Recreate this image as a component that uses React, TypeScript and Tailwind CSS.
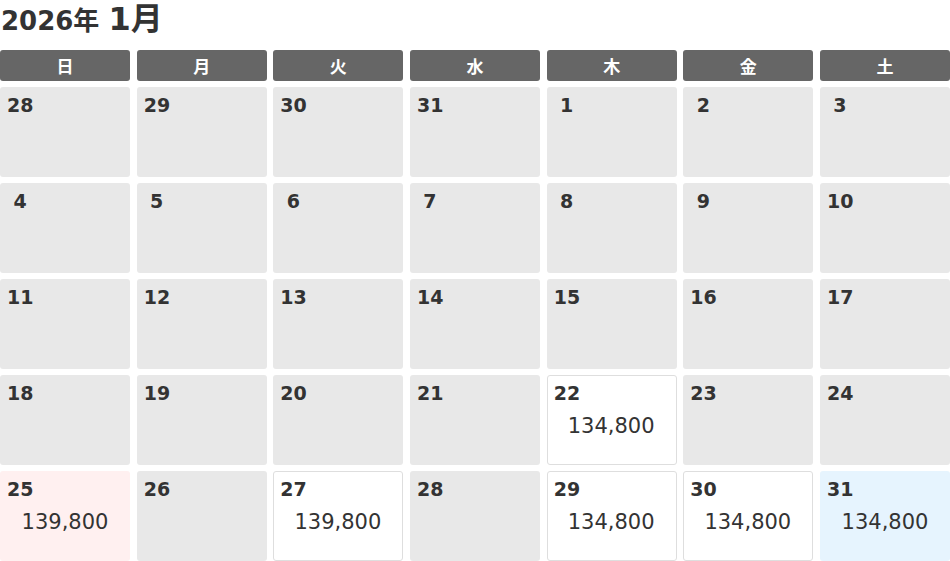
import React from "react";

type Cell = { d: number; kind: "gray" | "white" | "pink" | "blue"; price?: string };

const weeks: Cell[][] = [
  [28, 29, 30, 31, 1, 2, 3].map((d) => ({ d, kind: "gray" as const })),
  [4, 5, 6, 7, 8, 9, 10].map((d) => ({ d, kind: "gray" as const })),
  [11, 12, 13, 14, 15, 16, 17].map((d) => ({ d, kind: "gray" as const })),
  [
    { d: 18, kind: "gray" },
    { d: 19, kind: "gray" },
    { d: 20, kind: "gray" },
    { d: 21, kind: "gray" },
    { d: 22, kind: "white", price: "134,800" },
    { d: 23, kind: "gray" },
    { d: 24, kind: "gray" },
  ],
  [
    { d: 25, kind: "pink", price: "139,800" },
    { d: 26, kind: "gray" },
    { d: 27, kind: "white", price: "139,800" },
    { d: 28, kind: "gray" },
    { d: 29, kind: "white", price: "134,800" },
    { d: 30, kind: "white", price: "134,800" },
    { d: 31, kind: "blue", price: "134,800" },
  ],
];

const heads = ["日", "月", "火", "水", "木", "金", "土"];

const kindClass: Record<Cell["kind"], string> = {
  gray: "bg-[#e8e8e8] pl-[7px] pt-[6px]",
  white: "bg-white border border-[#dedede] pl-[6px] pt-[5px]",
  pink: "bg-[#fff0f0] pl-[7px] pt-[6px]",
  blue: "bg-[#e6f4fe] pl-[7px] pt-[6px]",
};

export default function App() {
  return (
    <div
      className="w-[950px] h-[561px] bg-white text-[#333] overflow-hidden"
      style={{ fontFamily: '"DejaVu Sans", "Noto Sans CJK JP", sans-serif' }}
    >
      <div className="h-[50px] pt-[3px] pl-[1px] flex items-baseline font-bold">
        <span className="text-[26px] leading-none">2026年</span>
        <span className="text-[26px] leading-none">&nbsp;</span>
        <span className="text-[32px] leading-none">1月</span>
      </div>
      <div className="grid grid-cols-7 gap-x-[6.67px] gap-y-[6px]">
        {heads.map((h) => (
          <div
            key={h}
            className="h-[31px] rounded-[3px] bg-[#666666] text-white font-bold text-[17px] flex items-center justify-center"
            style={{ fontFamily: '"Noto Sans CJK JP", "DejaVu Sans", sans-serif' }}
          >
            {h}
          </div>
        ))}
        {weeks.flat().map((c, i) => (
          <div key={i} className={`h-[90px] rounded-[3px] ${kindClass[c.kind]}`}>
            <div className="leading-[24px] text-[19px] font-bold">
              <span className="inline-block w-[26px] text-center">{c.d}</span>
            </div>
            {c.price && (
              <div className="mt-[6px] pr-[7px] text-center text-[21px] leading-[30px]">{c.price}</div>
            )}
          </div>
        ))}
      </div>
    </div>
  );
}
